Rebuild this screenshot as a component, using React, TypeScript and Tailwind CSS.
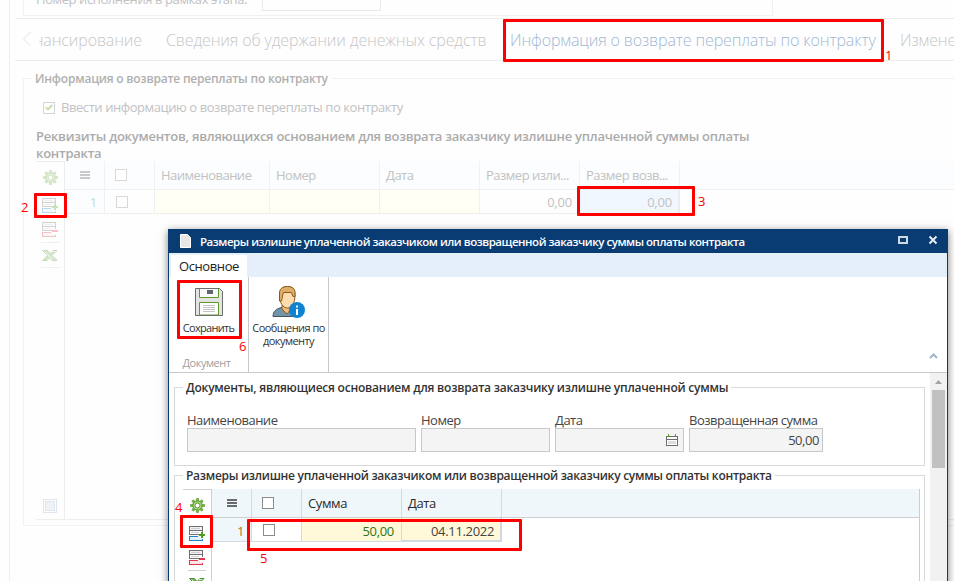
import React from "react";

const GRAY = "#6f6f6f";

function Gear() {
  return (
    <svg width="15" height="15" viewBox="0 0 15 15" className="ml-[7px] mt-[8px] block">
      <g fill="#7cb54d" stroke="#5b9a2b" strokeWidth="0.6">
        {[0, 45, 90, 135, 180, 225, 270, 315].map((a) => (
          <path key={a} d="M6 3.500L6.600 0.300h1.800L9 3.500z" transform={`rotate(${a} 7.5 7.5)`} />
        ))}
      </g>
      <circle cx="7.5" cy="7.5" r="4.500" fill="#b5d896" stroke="#5b9a2b" />
      <circle cx="7.5" cy="7.5" r="2.500" fill="#fff" stroke="#5b9a2b" />
    </svg>
  );
}

function Rows({ color, tint }: { color: string; tint: string }) {
  return (
    <g fill="none" shapeRendering="crispEdges">
      <rect x="0.5" y="0.5" width="13" height="4" fill="#f2f2f2" stroke={GRAY} />
      <path d="M13.5 4.5v2M0.5 4.5v4h9.5" stroke={GRAY} />
      <path d="M2 2.5h9M2 6.5h8" stroke="#cfcfcf" />
      <path d="M9 10.5H0.5v4h13v-2" stroke={color} fill={tint} />
    </g>
  );
}

function AddRow() {
  return (
    <svg width="16" height="15" viewBox="0 0 16 15" className="ml-[6px] mt-[13px] block">
      <Rows color="#1b86d0" tint="#e2f1fb" />
      <path d="M12 6h2v2h2v2h-2v2h-2v-2h-2v-2h2z" fill="#4f9d1c" shapeRendering="crispEdges" />
    </svg>
  );
}

function RemoveRow() {
  return (
    <svg width="16" height="15" viewBox="0 0 16 15" className="ml-[6px] mt-[9px] block">
      <Rows color="#e8344a" tint="#fde6e9" />
      <path d="M10 8h6v2h-6z" fill="#e8344a" shapeRendering="crispEdges" />
    </svg>
  );
}

function Excel() {
  return (
    <svg width="16" height="11" viewBox="0 0 16 11" className="ml-[6px] mt-[7px] block">
      <path d="M0.5 0.5h5l2.5 3.2L11 0.5h4l-5 5 5 5h-5L7.6 7.6 5 10.5H0.5l5-5z" fill="#7db55c" stroke="#4c8f2f" />
      <path d="M2.500 1.500l8 8M9.500 1.500h4" stroke="#d6ebc8" fill="none" />
    </svg>
  );
}

function ToolIcons() {
  return (
    <>
      <Gear />
      <AddRow />
      <RemoveRow />
      <div className="ml-[5px] mt-[5px] h-px w-[18px] bg-[#cfcfcf]" />
      <Excel />
      <div className="ml-[5px] mt-[6px] h-px w-[18px] bg-[#cfcfcf]" />
    </>
  );
}

function Burger() {
  return (
    <div className="flex w-[10px] flex-col gap-[1px]">
      <div className="h-[2px] bg-[#6b6b6b]" />
      <div className="h-[2px] bg-[#6b6b6b]" />
      <div className="h-[2px] bg-[#6b6b6b]" />
    </div>
  );
}

function HeadCell({ w, children }: { w: string; children?: React.ReactNode }) {
  return <div className={`${w} shrink-0 whitespace-nowrap border-r border-[#f0f1f3] pl-[6px]`}>{children}</div>;
}

function Background() {
  return (
    <div className="ml-[9px] h-[581px] border-l border-[#ededed] text-[#c2c2c2]">
      <div className="ml-[13px] flex h-[16px] w-[750px] items-start overflow-hidden border-x border-b border-[#f1f1f1]">
        <div className="-mt-[10px] ml-[12px] w-[226px] whitespace-nowrap text-[13px] leading-[18px] tracking-[-0.41px]">Номер исполнения в рамках этапа:</div>
        <div className="h-[11px] w-[119px] border-x border-b border-[#e9e9e9]" />
      </div>
      <div className="ml-[5px] mt-[2px] flex h-[43px] overflow-hidden whitespace-nowrap border-y border-[#ebebeb] text-[16px] font-light leading-[42px] tracking-[-0.13px] text-[#c6c6c6]">
        <svg width="10" height="16" viewBox="0 0 10 16" className="ml-[7px] mt-[12px] shrink-0">
          <path d="M8.500 1L1.500 8l7 7" fill="none" stroke="#e2e2e2" />
        </svg>
        <div className="ml-[7px] flex w-[103px] shrink-0 justify-end overflow-hidden">Финансирование</div>
        <div className="ml-[24px] w-[344px] shrink-0">Сведения об удержании денежных средств</div>
        <div className="-mt-px w-[365px] shrink-0 border-t border-[#b4c6d6] text-[#a0b8d3]">Информация о возврате переплаты по контракту</div>
        <div className="ml-[25px] shrink-0">Изменение</div>
      </div>
      <fieldset className="-mr-[20px] ml-[13px] mt-[9px] h-[456px] border border-[#f1f1f1]">
        <legend className="ml-[8px] px-[3px] text-[12px] font-semibold leading-[17px] tracking-[-0.22px] text-[#b0b0b0]">Информация о возврате переплаты по контракту</legend>
        <div className="ml-[19px] mt-[12px] flex items-center gap-[6px] text-[13px] leading-[17px] tracking-[-0.43px]">
          <div className="flex h-[12px] w-[12px] items-center justify-center border border-[#d5d5d5]">
            <svg width="8" height="7" viewBox="0 0 8 7"><path d="M0.800 3.200L3 5.400 7.200 1" fill="none" stroke="#c5dfae" strokeWidth="2" /></svg>
          </div>
          Ввести информацию о возврате переплаты по контракту
        </div>
        <div className="-mb-px ml-[12px] mt-[12px] w-[730px] text-[13px] font-semibold leading-[17px] tracking-[-0.25px] text-[#ababab]">
          Реквизиты документов, являющихся основанием для возврата заказчику излишне уплаченной суммы оплаты контракта
        </div>
        <div className="ml-[12px] flex h-[359px] border-b border-[#eeeeee]">
          <div className="flex w-[29px] shrink-0 flex-col border-r border-t border-[#ededed] pb-[6px]">
            <div className="opacity-30"><ToolIcons /></div>
            <div className="ml-[7px] mt-auto flex h-[14px] w-[14px] items-center justify-center border border-[#dfe5ee]">
              <div className="h-[10px] w-[10px] border border-[#dfe5ee] bg-[#eef1f6]" />
            </div>
          </div>
          <div className="flex-1 tracking-[-0.5px]">
            <div className="flex h-[29px] border-b border-[#eeeff1] bg-[#fbfdfe] text-[13px] leading-[29px]">
              <HeadCell w="w-[40px]"><div className="ml-[9px] mt-[10px] opacity-35"><Burger /></div></HeadCell>
              <HeadCell w="w-[50px]"><div className="ml-[4px] mt-[8px] h-[12px] w-[12px] border border-[#d8d8d8] bg-white" /></HeadCell>
              <HeadCell w="w-[115px]">Наименование</HeadCell>
              <HeadCell w="w-[110px]">Номер</HeadCell>
              <HeadCell w="w-[100px]">Дата</HeadCell>
              <HeadCell w="w-[100px]">Размер изли...</HeadCell>
              <HeadCell w="w-[100px]">Размер возв...</HeadCell>
            </div>
            <div className="flex h-[24px] w-[615px] border-b border-[#efefef] text-[13px] leading-[25px] tracking-[-0.2px]">
              <div className="w-[40px] border-r border-[#eeeff1] bg-[#fbfdfe] pr-[7px] text-right text-[#c3d6e4]">1</div>
              <div className="w-[50px] border-r border-[#eeeff1]"><div className="ml-[11px] mt-[6px] h-[12px] w-[12px] border border-[#d8d8d8]" /></div>
              <div className="w-[115px] border-r border-[#f2f2ea] bg-[#fffff5]" />
              <div className="w-[110px] border-r border-[#f2f2ea] bg-[#fffff5]" />
              <div className="w-[100px] border-r border-[#f2f2ea] bg-[#fffff5]" />
              <div className="w-[100px] border-r border-[#eeeff1] pr-[7px] text-right">0,00</div>
              <div className="w-[100px] border-r-2 border-[#e9edf1] bg-[#f0f7fe] pr-[6px] text-right">0,00</div>
            </div>
          </div>
        </div>
      </fieldset>
    </div>
  );
}

function Floppy() {
  return (
    <svg width="28" height="28" viewBox="0 0 28 28">
      <path d="M.5.5h24l3 3v24H.5z" fill="#e3e3e3" stroke="#6d6d6d" />
      <path d="M4.500 1v8.500h19V1" fill="#f8f8f8" stroke="#5b9a2b" />
      <path d="M12 2h6v4h-6z" fill="#5f666d" />
      <path d="M4.500 27V14.500h19V27z" fill="#fff" stroke="#5b9a2b" />
      <path d="M8 17.500h12M8 19.500h12M8 21.500h12M8 23.500h12" stroke="#c4c4c4" />
      <path d="M.5 27.500h27" stroke="#6d6d6d" />
    </svg>
  );
}

function Person() {
  return (
    <svg width="34" height="34" viewBox="0 0 34 34">
      <path d="M1 31.500c0-5 3-8 9-9l6 4 5-4 6 9z" fill="#7393a7" stroke="#3f5566" />
      <path d="M10 20l0 4 5 5 4-5v-4z" fill="#f0bd7c" stroke="#8a5a22" />
      <path d="M7.500 10c0-6 3-8.500 8-8.500s7.500 3 7.500 8.500c0 8-3 13-7.500 13S7.500 18 7.500 10z" fill="#ffdcae" stroke="#8a5a22" />
      <path d="M7.500 16V8c0-4 3-6.500 8-6.500s7.500 2.500 7.500 6v4h-2l-1.500-4h-8c-1 2-1 5-2 8.500z" fill="#e0ad66" stroke="#8a5a22" />
      <circle cx="25" cy="25" r="8" fill="#0f83d2" />
      <path d="M24 20.500h2v2h-2zM24 24h2v6h-2z" fill="#fff" />
    </svg>
  );
}

function Input({ w, children }: { w: string; children?: React.ReactNode }) {
  return <div className={`${w} flex h-[24px] items-center justify-end border border-[#c8c8c8] bg-[#f4f4f4]`}>{children}</div>;
}

function Modal() {
  return (
    <div className="absolute left-[168px] top-[229px] flex h-[380px] w-[780px] flex-col border-x border-[#083c72] bg-white text-[13px] text-[#333] shadow-[0_2px_8px_rgba(0,0,0,0.5)]">
      <div className="flex h-[24px] shrink-0 items-center bg-[#083c72] text-[11.5px] font-semibold tracking-[-0.46px] text-white">
        <svg width="11" height="14" viewBox="0 0 11 14" className="ml-[11px]"><path d="M0.500.5h7l3 3v10H.5z" fill="#e6e6e6" stroke="#fff" /></svg>
        <div className="ml-[9px] mt-px whitespace-nowrap">Размеры излишне уплаченной заказчиком или возвращенной заказчику суммы оплаты контракта</div>
        <div className="-mt-[2px] ml-auto h-[8px] w-[10px] border-2 border-[#cfd9e4]" />
        <svg width="10" height="10" viewBox="0 0 10 10" className="-mt-[2px] ml-[20px] mr-[9px]"><path d="M1.500 1.500l7 7M8.500 1.500l-7 7" stroke="#e6edf4" strokeWidth="2" /></svg>
      </div>
      <div className="h-[24px] shrink-0 bg-[#e5effa] pl-[2px] pt-[2px]">
        <div className="h-[22px] w-[76px] bg-white text-center text-[13px] leading-[23px] tracking-[-0.4px] text-[#222]">Основное</div>
      </div>
      <div className="flex h-[96px] shrink-0 border-b border-[#c9c9c9] text-[11px] leading-[13px]">
        <div className="flex w-[80px] flex-col items-center border-r border-[#c9c9c9] pt-[11px]">
          <Floppy />
          <div className="mt-[5px] tracking-[-0.7px]">Сохранить</div>
          <div className="mb-[3px] mr-[4px] mt-auto tracking-[-0.45px] text-[#a0a0a0]">Документ</div>
        </div>
        <div className="flex w-[80px] flex-col items-center border-r border-[#c9c9c9] pt-[8px]">
          <Person />
          <div className="mt-[2px] whitespace-nowrap text-center tracking-[-0.55px]">Сообщения по<br />документу</div>
        </div>
        <svg width="9" height="6" viewBox="0 0 9 6" className="mb-[13px] ml-auto mr-[9px] mt-auto"><path d="M1 5l3.500-3.500L8 5" fill="none" stroke="#9fb4cf" strokeWidth="2" /></svg>
      </div>
      <div className="flex flex-1 overflow-hidden tracking-[-0.5px] text-[#444]">
        <div className="w-[761px] shrink-0 pl-[5px] pt-[6px]">
          <fieldset className="h-[87px] w-[751px] border border-[#d9d9d9]">
            <legend className="ml-[8px] px-[3px] text-[12px] font-semibold leading-[17px] tracking-[-0.22px] text-[#333]">Документы, являющиеся основанием для возврата заказчику излишне уплаченной суммы</legend>
            <div className="ml-[12px] mt-[16px] flex gap-[5px] leading-[16px]">
              <div>Наименование<Input w="w-[229px]" /></div>
              <div>Номер<Input w="w-[129px]" /></div>
              <div>Дата<Input w="w-[129px]">
                <svg width="12" height="13" viewBox="0 0 12 13" className="mr-[5px]" shapeRendering="crispEdges">
                  <path d="M.5 2.500h11v9H.5zM.5 5h11" fill="#fff" stroke="#6d6d6d" />
                  <path d="M2 7h8v3H2z" fill="#dcdcdc" /><path d="M2.500 0v2.500M9.500 0v2.500" stroke="#4f9d1c" />
                </svg>
              </Input></div>
              <div className="whitespace-nowrap">Возвращенная сумма<Input w="w-[134px]"><span className="pr-[3px] tracking-[-0.45px]">50,00</span></Input></div>
            </div>
          </fieldset>
          <fieldset className="mt-px h-[200px] w-[751px] border border-[#d9d9d9]">
            <legend className="ml-[8px] px-[3px] text-[12px] font-semibold leading-[17px] tracking-[-0.28px] text-[#333]">Размеры излишне уплаченной заказчиком или возвращенной заказчику суммы оплаты контракта</legend>
            <div className="ml-[8px] mr-[4px] mt-[5px] flex h-[180px] border-r border-[#c8cdd2]">
              <div className="w-[29px] shrink-0 border-r border-t border-[#cfcfcf]"><ToolIcons /></div>
              <div className="flex-1">
                <div className="flex h-[29px] border-b border-[#cfcfcf] bg-[#eff7fb] leading-[29px] tracking-[-0.4px] text-[#2a2a2a]">
                  <div className="w-[40px] border-r border-[#d3dae2]"><div className="ml-[15px] mt-[10px]"><Burger /></div></div>
                  <div className="w-[50px] border-r border-[#d3dae2]"><div className="ml-[10px] mt-[8px] h-[12px] w-[12px] border border-[#8c8c8c] bg-white" /></div>
                  <div className="w-[100px] border-r border-[#d3dae2] pl-[6px]">Сумма</div>
                  <div className="w-[100px] border-r border-[#d3dae2] pl-[6px]">Дата</div>
                </div>
                <div className="flex h-[24px] w-[290px] border-b border-[#d3dae2] leading-[26px]">
                  <div className="w-[40px] border-r border-[#d3dae2] bg-[#eff7fb] pr-[7px] text-right text-[#a8772c]">1</div>
                  <div className="w-[50px] border-r border-[#d3dae2]"><div className="ml-[11px] mt-[6px] h-[12px] w-[12px] border border-[#8c8c8c]" /></div>
                  <div className="w-[100px] border-r border-[#d3dae2] bg-[#fff9d9] pr-[7px] text-right tracking-[-0.3px] text-[#2f7414]">50,00</div>
                  <div className="w-[100px] border-b border-r-2 border-[#cfd7e2] bg-[#fff9d9] pr-[6px] text-right tracking-[-0.33px]">04.11.2022</div>
                </div>
              </div>
            </div>
          </fieldset>
        </div>
        <div className="flex w-[17px] flex-col items-center bg-[#f1f1f1] pt-[7px]">
          <svg width="7" height="4" viewBox="0 0 7 4"><path d="M0 4l3.500-4L7 4z" fill="#a3a3a3" /></svg>
          <div className="mt-[6px] h-[78px] w-[13px] bg-[#c1c1c1]" />
        </div>
      </div>
    </div>
  );
}

const MARK = "absolute rounded-[1px] border-[3px] border-[#ff0000]";
const NUM = "absolute text-[13px] leading-[14px] text-[#ff0000]";

export default function App() {
  return (
    <div className="relative h-[581px] w-[954px] overflow-hidden bg-[#fefefe] font-['Open_Sans','Noto_Sans',sans-serif] font-normal">
      <Background />
      <Modal />
      <div className={`${MARK} left-[503px] top-[19px] h-[43px] w-[381px]`} />
      <div className={`${MARK} left-[34px] top-[193px] h-[25px] w-[33px]`} />
      <div className={`${MARK} left-[577px] top-[186px] h-[30px] w-[118px]`} />
      <div className={`${MARK} left-[180px] top-[515px] h-[33px] w-[33px]`} />
      <div className={`${MARK} left-[247px] top-[519px] h-[32px] w-[275px]`} />
      <div className={`${MARK} left-[177px] top-[280px] h-[59px] w-[65px]`} />
      <div className={`${NUM} left-[885px] top-[48px]`}>1</div>
      <div className={`${NUM} left-[21px] top-[200px]`}>2</div>
      <div className={`${NUM} left-[698px] top-[194px]`}>3</div>
      <div className={`${NUM} left-[175px] top-[500px]`}>4</div>
      <div className={`${NUM} left-[260px] top-[551px]`}>5</div>
      <div className={`${NUM} left-[239px] top-[339px]`}>6</div>
    </div>
  );
}
